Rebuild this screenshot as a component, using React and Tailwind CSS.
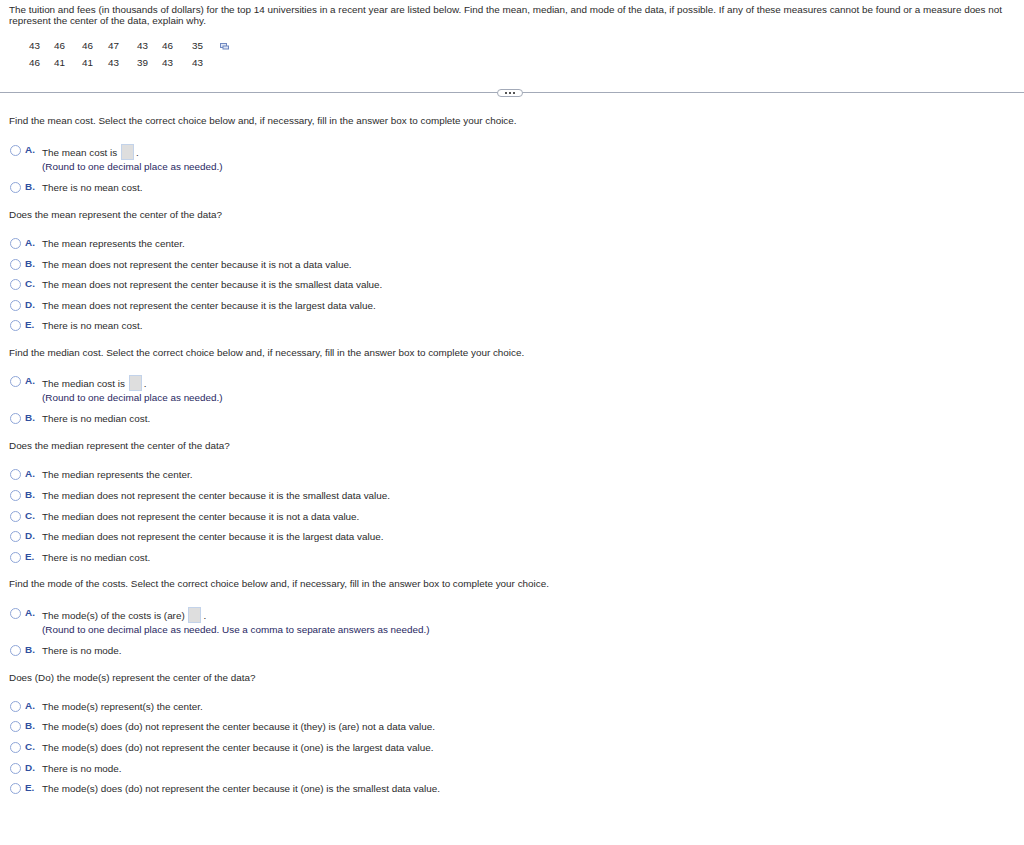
import React from "react";

const sections = [
  {
    prompt: "Find the mean cost. Select the correct choice below and, if necessary, fill in the answer box to complete your choice.",
    answerLead: "The mean cost is",
    hint: "(Round to one decimal place as needed.)",
    none: "There is no mean cost.",
    question: "Does the mean represent the center of the data?",
    options: [
      "The mean represents the center.",
      "The mean does not represent the center because it is not a data value.",
      "The mean does not represent the center because it is the smallest data value.",
      "The mean does not represent the center because it is the largest data value.",
      "There is no mean cost.",
    ],
    leadGap: "mt-[16px]",
    after: "mb-[13px]",
  },
  {
    prompt: "Find the median cost. Select the correct choice below and, if necessary, fill in the answer box to complete your choice.",
    answerLead: "The median cost is",
    hint: "(Round to one decimal place as needed.)",
    none: "There is no median cost.",
    question: "Does the median represent the center of the data?",
    options: [
      "The median represents the center.",
      "The median does not represent the center because it is the smallest data value.",
      "The median does not represent the center because it is not a data value.",
      "The median does not represent the center because it is the largest data value.",
      "There is no median cost.",
    ],
    leadGap: "mt-[15px]",
    after: "mb-[12px]",
  },
  {
    prompt: "Find the mode of the costs. Select the correct choice below and, if necessary, fill in the answer box to complete your choice.",
    answerLead: "The mode(s) of the costs is (are)",
    hint: "(Round to one decimal place as needed. Use a comma to separate answers as needed.)",
    none: "There is no mode.",
    question: "Does (Do) the mode(s) represent the center of the data?",
    options: [
      "The mode(s) represent(s) the center.",
      "The mode(s) does (do) not represent the center because it (they) is (are) not a data value.",
      "The mode(s) does (do) not represent the center because it (one) is the largest data value.",
      "There is no mode.",
      "The mode(s) does (do) not represent the center because it (one) is the smallest data value.",
    ],
    leadGap: "mt-[16px]",
    after: "",
  },
];

const rowOne = ["43", "46", "46", "47", "43", "46", "35"];
const rowTwo = ["46", "41", "41", "43", "39", "43", "43"];

function Radio() {
  return <span className="block w-[11px] h-[11px] rounded-full border-[1.5px] border-[#8fa6d8] bg-white shrink-0" />;
}

function Choice({ letter, children }) {
  return (
    <div className="flex items-start h-[14px] leading-[14px]">
      <span className="ml-[10px] mt-[1px]"><Radio /></span>
      <span className="ml-[4px] w-[17px] font-bold text-[#2f4f9f] -mt-[1px]">{letter}.</span>
      <div>{children}</div>
    </div>
  );
}

function AnswerBox() {
  return <span className="inline-block w-[13px] h-[16px] ml-[1px] mr-[2px] -mb-[4px] bg-[#dedede] border border-[#c3d3ea]" />;
}

function Section({ data }) {
  return (
    <section className={data.after}>
      <p className="ml-[9px] h-[14px] leading-[14px]">{data.prompt}</p>
      <div className={data.leadGap}>
        <Choice letter="A">
          {data.answerLead} <AnswerBox />.
          <div className="text-[#27275f]">{data.hint}</div>
        </Choice>
      </div>
      <div className="mt-[23px]">
        <Choice letter="B">{data.none}</Choice>
      </div>
      <p className="ml-[9px] mt-[13px] h-[14px] leading-[14px]">{data.question}</p>
      <div className="mt-[15px] flex flex-col gap-[6.6px]">
        {data.options.map((text, i) => (
          <Choice key={i} letter={"ABCDE"[i]}>{text}</Choice>
        ))}
      </div>
    </section>
  );
}

export default function App() {
  return (
    <div className="w-[1024px] h-[845px] bg-white text-[#2b2b2b] text-[9.9px] font-['Liberation_Sans',Arial,sans-serif] overflow-hidden">
      <div className="pt-[4px] px-[9px] leading-[11px]">
        The tuition and fees (in thousands of dollars) for the top 14 universities in a recent year are listed below. Find the mean, median, and mode of the data, if possible. If any of these measures cannot be found or a measure does not represent the center of the data, explain why.
      </div>

      <div className="mt-[12px] ml-[29px] grid grid-cols-[25px_28px_26px_29px_25px_30px_27px_10px] h-[34px] grid-rows-[17px_17px] items-center">
        {rowOne.map((n, i) => <span key={i}>{n}</span>)}
        <svg width="9" height="7" viewBox="0 0 9 7" fill="none" className="ml-[1px]">
          <rect x="0.5" y="0.5" width="6" height="4" fill="#dfe6f5" stroke="#6f88c0" />
          <rect x="3" y="3" width="5.5" height="3" fill="#dfe6f5" stroke="#6f88c0" />
        </svg>
        {rowTwo.map((n, i) => <span key={i}>{n}</span>)}
      </div>

      <div className="relative mt-[20px] h-[1px] bg-[#a3aab8]">
        <div className="absolute left-[497px] -top-[3px] w-[26px] h-[8px] rounded-full border border-[#a3aab8] bg-white flex items-center justify-center gap-[2px]">
          <span className="w-[2px] h-[2px] bg-[#555]" />
          <span className="w-[2px] h-[2px] bg-[#555]" />
          <span className="w-[2px] h-[2px] bg-[#555]" />
        </div>
      </div>

      <div className="mt-[21px]">
        {sections.map((s, i) => <Section key={i} data={s} />)}
      </div>
    </div>
  );
}
